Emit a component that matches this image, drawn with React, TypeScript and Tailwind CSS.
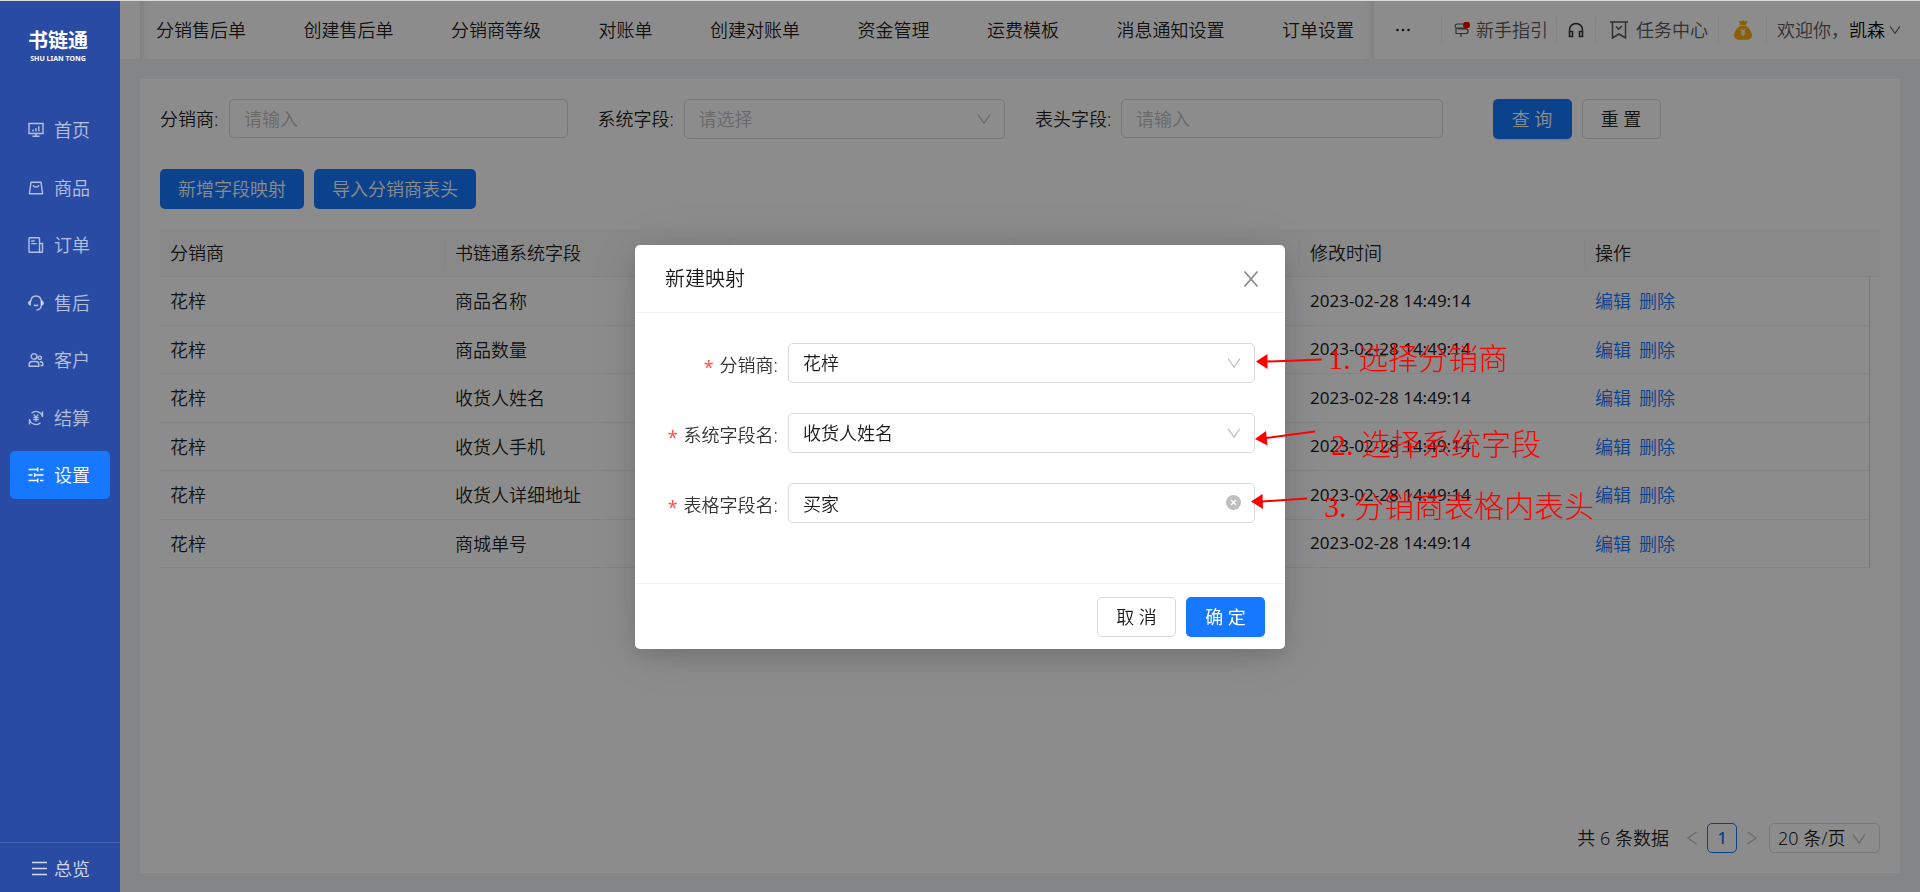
/**
 * @file App.tsx
 * @description Distributor field mapping page with the "new mapping" dialog open.
 */

import type { ReactNode } from 'react';

interface IconProps {
  className?: string;
}

interface MenuItem {
  label: string;
  icon: ReactNode;
  active?: boolean;
}

interface MappingRow {
  distributor: string;
  field: string;
  updatedAt: string;
}

const TABS = [
  '分销售后单',
  '创建售后单',
  '分销商等级',
  '对账单',
  '创建对账单',
  '资金管理',
  '运费模板',
  '消息通知设置',
  '订单设置',
];

const ROWS: MappingRow[] = [
  { distributor: '花梓', field: '商品名称', updatedAt: '2023-02-28 14:49:14' },
  { distributor: '花梓', field: '商品数量', updatedAt: '2023-02-28 14:49:14' },
  { distributor: '花梓', field: '收货人姓名', updatedAt: '2023-02-28 14:49:14' },
  { distributor: '花梓', field: '收货人手机', updatedAt: '2023-02-28 14:49:14' },
  { distributor: '花梓', field: '收货人详细地址', updatedAt: '2023-02-28 14:49:14' },
  { distributor: '花梓', field: '商城单号', updatedAt: '2023-02-28 14:49:14' },
];

/** 16px line icon used by the side menu. */
function MenuIcon({ children }: { children: ReactNode }) {
  return (
    <svg
      className="size-4 shrink-0"
      viewBox="0 0 16 16"
      fill="none"
      stroke="currentColor"
      strokeWidth="1.4"
      aria-hidden="true"
    >
      {children}
    </svg>
  );
}

const MENU: MenuItem[] = [
  {
    label: '首页',
    icon: (
      <MenuIcon>
        <path d="M1 1.5h14v10H1zM8 11.5v2.6M4.5 14.3h7" />
        <path d="M5 9.5V7.6M7.9 9.5V6M10.8 9.5V4.2" />
      </MenuIcon>
    ),
  },
  {
    label: '商品',
    icon: (
      <MenuIcon>
        <path d="M3 2.2h10l1.6 11.6H1.4z" strokeLinejoin="round" />
        <path d="M5 5.3c.6 1.2 1.7 1.8 3 1.8s2.4-.6 3-1.8" />
      </MenuIcon>
    ),
  },
  {
    label: '订单',
    icon: (
      <MenuIcon>
        <path d="M11.5 15.3H1.8a.8.8 0 0 1-.8-.8v-13a.8.8 0 0 1 .8-.8h8.9a.8.8 0 0 1 .8.8v13.8zM11.5 6.5h3v8a.8.8 0 0 1-.8.8h-2.2" />
        <path d="M3.2 4h3.5M3.2 6.6h5.5" />
      </MenuIcon>
    ),
  },
  {
    label: '售后',
    icon: (
      <MenuIcon>
        <path d="M2.7 6.5C3 3 5.2 1 8 1s5 2 5.3 5.5v4.2c-.3 2.5-2.2 4.2-4.8 4.3M5.8 9.8c1.3.9 3.1.9 4.4 0" />
        <path
          d="M2.6 5.8v4.5C1 10.2.3 9.3.3 8s.7-2.1 2.3-2.2zM13.4 5.8v4.5c1.6-.1 2.3-1 2.3-2.3s-.7-2.1-2.3-2.2z"
          fill="currentColor"
          strokeWidth="0.6"
        />
      </MenuIcon>
    ),
  },
  {
    label: '客户',
    icon: (
      <MenuIcon>
        <circle cx="6" cy="4.4" r="2.8" />
        <circle cx="11.8" cy="5.8" r="1.7" />
        <path d="M1.2 14.3v-1.8a3 3 0 0 1 3-3h3.6a3 3 0 0 1 3 3v1.8zM11.8 9.8h.6a2.4 2.4 0 0 1 2.4 2.4v1.3h-2.3" />
      </MenuIcon>
    ),
  },
  {
    label: '结算',
    icon: (
      <MenuIcon>
        <path d="M3.5 3.2A6.6 6.6 0 0 1 14.5 7M12.5 12.8A6.6 6.6 0 0 1 1.5 9M14.5 1.5V7M1.5 14.5V9" />
        <path d="m5.7 4.5 2.3 2.8 2.3-2.8M5.3 7.6h5.4M5.3 9.7h5.4M8 7.3v4.5" strokeWidth="1.2" />
      </MenuIcon>
    ),
  },
  {
    label: '设置',
    active: true,
    icon: (
      <MenuIcon>
        <path d="M.5 2.5H9M12 2.5h3.5M9.7.5v4M.5 8h4M7.5 8h8M6.6 6v4M.5 13.5H9M12 13.5h3.5M9.7 11.5v4" />
      </MenuIcon>
    ),
  },
];

function ChevronDown({ className }: IconProps) {
  return (
    <svg className={className} viewBox="0 0 14 12" fill="none" stroke="currentColor" strokeWidth="1.3" aria-hidden="true">
      <path d="M1 1.5 7 10l6-8.5" />
    </svg>
  );
}

function GuideIcon() {
  return (
    <svg className="size-4" viewBox="0 0 16 16" fill="none" stroke="#595959" strokeWidth="1.2" aria-hidden="true">
      <path d="M9 2H3.2a2 2 0 0 0-2 2.1 2 2 0 0 0 2 2.100H11M2 6.200v5.300h9.800a2.300 2.300 0 0 0 0-4.600H4M7 11.500V15" />
      <circle cx="12.5" cy="3" r="3.5" fill="#ff0000" stroke="none" />
    </svg>
  );
}

function HeadphoneIcon() {
  return (
    <svg className="size-4" viewBox="0 0 16 16" fill="none" stroke="#333333" strokeWidth="1.5" aria-hidden="true">
      <path d="M1.5 14V8a6.5 6.5 0 0 1 13 0v6M1.5 9.5h3v5h-3zM11.5 9.5h3v5h-3z" />
    </svg>
  );
}

function TaskIcon() {
  return (
    <svg className="size-[18px]" viewBox="0 0 18 18" fill="none" stroke="#595959" strokeWidth="1.5" aria-hidden="true">
      <path d="M0 1h18M2.5 1v16L9 13l6.5 4V1M6 5.5l2.7 2.8L12 5" />
    </svg>
  );
}

function MoneyBagIcon() {
  return (
    <svg className="size-5" viewBox="0 0 20 20" aria-hidden="true">
      <path
        d="M5.5.5 8 1.5 10 .3l2 1.2 2.7-1-2 4.7H7.300zM7 6h6c3.5 2.3 6 6.3 6 9.3 0 3-2 4.400-5 4.400H6c-3 0-5-1.400-5-4.400C1 12.300 3.500 8.300 7 6z"
        fill="#faad14"
      />
      <path d="m7.8 8.800 2.200 2.700 2.200-2.700M7.700 12h4.600M7.700 14h4.600M10 11.500V16" fill="none" stroke="#ffffff" strokeWidth="1.1" />
    </svg>
  );
}

function Sidebar() {
  return (
    <aside className="relative z-20 flex w-[120px] shrink-0 flex-col bg-[#294ba4] text-white/65">
      <div className="flex flex-col items-center pt-7 pr-1 text-white">
        <span className="text-[20px] leading-6 font-bold">书链通</span>
        <span className="text-[7px] leading-3 font-bold">SHU LIAN TONG</span>
      </div>
      <nav className="mt-[41px] flex h-[393px] flex-col justify-between px-2.5">
        {MENU.map((item) => (
          <a
            key={item.label}
            href="#"
            className={
              item.active
                ? 'flex h-12 items-center gap-2.5 rounded-[5px] bg-[#1677ff] pl-[18px] text-lg text-white'
                : 'flex h-12 items-center gap-2.5 rounded-[5px] pl-[18px] text-lg'
            }
          >
            {item.icon}
            {item.label}
          </a>
        ))}
      </nav>
      <button
        type="button"
        className="mt-auto flex h-[50px] items-center gap-[7px] border-t border-white/15 pt-0.5 pl-8 text-lg text-white/80"
      >
        <svg className="size-[15px]" viewBox="0 0 15 15" fill="none" stroke="currentColor" strokeWidth="1.3" aria-hidden="true">
          <path d="M0 1.5h15M0 7.5h15M0 13.5h15" />
        </svg>
        总览
      </button>
    </aside>
  );
}

function Divider() {
  return <span className="h-[26px] w-px bg-black/6" />;
}

function Header() {
  return (
    <header className="flex h-[58px] bg-white pl-5">
      <nav className="flex min-w-0 flex-1 items-center justify-between overflow-hidden pr-5 pl-4 text-lg whitespace-nowrap shadow-[inset_10px_0_8px_-8px_rgba(0,0,0,0.12),inset_-10px_0_8px_-8px_rgba(0,0,0,0.12)]">
        {TABS.map((tab) => (
          <a key={tab} href="#">
            {tab}
          </a>
        ))}
      </nav>
      <div className="flex shrink-0 items-center text-lg text-[#595959]">
        <button type="button" aria-label="更多" className="mr-2.5 flex w-[57px] justify-center">
          <svg className="h-1 w-4" viewBox="0 0 16 4" fill="#222222" aria-hidden="true">
            <circle cx="2.5" cy="2" r="1.3" />
            <circle cx="8" cy="2" r="1.3" />
            <circle cx="13.5" cy="2" r="1.3" />
          </svg>
        </button>
        <Divider />
        <a href="#" className="flex w-[114px] items-center gap-1.5 pl-3">
          <GuideIcon />
          新手指引
        </a>
        <Divider />
        <button type="button" aria-label="客服" className="flex w-[38px] justify-center">
          <HeadphoneIcon />
        </button>
        <Divider />
        <a href="#" className="flex w-[122px] items-center gap-2 pl-3.5">
          <TaskIcon />
          任务中心
        </a>
        <Divider />
        <button type="button" aria-label="账户余额" className="flex w-[47px] justify-center">
          <MoneyBagIcon />
        </button>
        <Divider />
        <button type="button" className="flex w-[153px] items-center pl-2.5">
          欢迎你{'\uff0c'}
          <span className="text-black">凯森</span>
          <ChevronDown className="ml-1 h-2.5 w-3" />
        </button>
      </div>
    </header>
  );
}

function SearchForm() {
  return (
    <form className="grid grid-cols-4 gap-x-[30px]">
      <div className="flex items-start">
        <label htmlFor="distributor" className="w-[69px] shrink-0 leading-10">
          分销商:
        </label>
        <input
          id="distributor"
          type="text"
          placeholder="请输入"
          className="h-[39px] min-w-0 flex-1 rounded-[5px] border border-[#d9d9d9] px-3.5 placeholder:text-[#bfbfbf]"
        />
      </div>
      <div className="flex items-start">
        <label htmlFor="system-field" className="w-[86px] shrink-0 leading-10">
          系统字段:
        </label>
        <div className="relative min-w-0 flex-1">
          <select
            id="system-field"
            className="h-10 w-full appearance-none rounded-[5px] border border-[#d9d9d9] px-3.5 text-[#bfbfbf]"
          >
            <option>请选择</option>
          </select>
          <ChevronDown className="pointer-events-none absolute top-3.5 right-3.5 h-3 w-3.5 text-[#bfbfbf]" />
        </div>
      </div>
      <div className="flex items-start">
        <label htmlFor="header-field" className="w-[86px] shrink-0 leading-10">
          表头字段:
        </label>
        <input
          id="header-field"
          type="text"
          placeholder="请输入"
          className="h-[39px] min-w-0 flex-1 rounded-[5px] border border-[#d9d9d9] px-3.5 placeholder:text-[#bfbfbf]"
        />
      </div>
      <div className="flex items-center gap-2.5 pl-5">
        <button type="button" className="h-10 w-[79px] rounded-[5px] bg-[#1677ff] text-white shadow-[0_2px_0_rgba(5,145,255,0.1)]">
          查 询
        </button>
        <button type="button" className="h-10 w-[79px] rounded-[5px] border border-[#d9d9d9]">
          重 置
        </button>
      </div>
    </form>
  );
}

function HeadCell({ children, last = false }: { children?: ReactNode; last?: boolean }) {
  return (
    <th className="border-b border-[#f0f0f0] p-0 text-left font-[350]">
      <div className={last ? 'flex h-7 items-center px-2.5' : 'flex h-7 items-center border-r border-[#f0f0f0] px-2.5'}>
        {children}
      </div>
    </th>
  );
}

function MappingTable() {
  return (
    <table className="mt-5 w-full table-fixed border-separate border-spacing-0">
      <colgroup>
        <col />
        <col />
        <col />
        <col />
        <col />
        <col />
        <col className="w-2.5" />
      </colgroup>
      <thead>
        <tr className="h-12 bg-[#fafafa]">
          <HeadCell>分销商</HeadCell>
          <HeadCell>书链通系统字段</HeadCell>
          <HeadCell />
          <HeadCell />
          <HeadCell>修改时间</HeadCell>
          <HeadCell last>操作</HeadCell>
          <td className="border-b border-[#f0f0f0] p-0" />
        </tr>
      </thead>
      <tbody>
        {ROWS.map((row) => (
          <tr
            key={row.field}
            className="odd:h-[49px] even:h-12 [&>td]:border-b [&>td]:border-b-[#f0f0f0] [&>td]:px-2.5 [&>td]:py-0"
          >
            <td>{row.distributor}</td>
            <td>{row.field}</td>
            <td />
            <td />
            <td className="text-[17px] font-normal">{row.updatedAt}</td>
            <td className="border-r border-r-[#d9d9d9]">
              <div className="flex gap-2 text-[#1677ff]">
                <a href="#">编辑</a>
                <a href="#">删除</a>
              </div>
            </td>
          </tr>
        ))}
      </tbody>
    </table>
  );
}

function Pagination() {
  return (
    <div className="mt-auto flex items-center justify-end">
      <span className="mr-4">共 6 条数据</span>
      <button type="button" aria-label="上一页" className="text-[#bfbfbf]">
        <ChevronDown className="h-3 w-3.5 rotate-90" />
      </button>
      <button
        type="button"
        className="mx-2 size-[30px] rounded-[5px] border border-[#1677ff] text-[17px] leading-7 font-medium text-[#1677ff]"
      >
        1
      </button>
      <button type="button" aria-label="下一页" className="text-[#bfbfbf]">
        <ChevronDown className="h-3 w-3.5 -rotate-90" />
      </button>
      <div className="relative ml-2.5">
        <select
          aria-label="每页条数"
          className="block h-[30px] w-[111px] appearance-none rounded-[5px] border border-[#d9d9d9] px-2 leading-7"
        >
          <option>20 条/页</option>
        </select>
        <ChevronDown className="pointer-events-none absolute top-2.5 right-3.5 h-3 w-3.5 text-[#bfbfbf]" />
      </div>
    </div>
  );
}

function FormLabel({ htmlFor, children }: { htmlFor: string; children: ReactNode }) {
  return (
    <label htmlFor={htmlFor} className="flex w-[123px] shrink-0 justify-end pt-1 pr-2.5 text-[#333333]">
      <span className="mr-1.5 pt-1 leading-6 font-normal text-[#ff4d4f]">*</span>
      {children}:
    </label>
  );
}

function SelectField({ id, label, value }: { id: string; label: string; value: string }) {
  return (
    <div className="flex items-center">
      <FormLabel htmlFor={id}>{label}</FormLabel>
      <div className="relative flex-1">
        <select id={id} className="block h-10 w-full appearance-none rounded-[5px] border border-[#d9d9d9] px-3.5">
          <option>{value}</option>
        </select>
        <ChevronDown className="pointer-events-none absolute top-3.5 right-3.5 h-3 w-3.5 text-[#bfbfbf]" />
      </div>
    </div>
  );
}

/** Red step notes that float over the right edge of the dialog. */
function StepNotes() {
  return (
    <>
      <svg
        className="pointer-events-none absolute top-[90px] left-[610px] h-[190px] w-[90px]"
        viewBox="0 0 90 190"
        fill="#ff0000"
        stroke="#ff0000"
        strokeWidth="2"
        aria-hidden="true"
      >
        <path d="M22 26.5 77 24.5M21 103 70 96.5M17 166.5 62 163.5" />
        <path d="M11 26.5 22.5 19v15zM10 104l11-8 1.5 14.5zM6 166.5 17.5 159l.5 15z" stroke="none" />
      </svg>
      <div className="pointer-events-none absolute top-[94px] left-[693px] font-['Liberation_Serif','Noto_Sans_CJK_SC',serif] text-[30px] leading-10 font-light whitespace-nowrap text-[#ff0000]">
        1. 选择分销商
      </div>
      <div className="pointer-events-none absolute top-[180px] left-[696px] font-['Liberation_Serif','Noto_Sans_CJK_SC',serif] text-[30px] leading-10 font-light whitespace-nowrap text-[#ff0000]">
        2. 选择系统字段
      </div>
      <div className="pointer-events-none absolute top-[242px] left-[689px] font-['Liberation_Serif','Noto_Sans_CJK_SC',serif] text-[30px] leading-10 font-light whitespace-nowrap text-[#ff0000]">
        3. 分销商表格内表头
      </div>
    </>
  );
}

function MappingDialog() {
  return (
    <div
      role="dialog"
      aria-labelledby="dialog-title"
      className="relative w-[650px] rounded-[5px] bg-white shadow-[0_8px_20px_rgba(0,0,0,0.12),0_4px_60px_rgba(0,0,0,0.12)]"
    >
      <div className="flex h-[68px] items-center justify-between border-b border-[#f0f0f0] px-[30px] pt-0.5">
        <h2 id="dialog-title" className="text-xl">
          新建映射
        </h2>
        <button type="button" aria-label="关闭" className="mr-[-4px] text-[#8c8c8c]">
          <svg className="size-4" viewBox="0 0 16 16" fill="none" stroke="currentColor" strokeWidth="1.7" aria-hidden="true">
            <path d="m1.5.5 13 15M14.5.5l-13 15" />
          </svg>
        </button>
      </div>
      <form className="flex flex-col gap-[30px] px-[30px] pt-[30px] pb-[60px]">
        <SelectField id="form-distributor" label="分销商" value="花梓" />
        <SelectField id="form-system-field" label="系统字段名" value="收货人姓名" />
        <div className="flex items-center">
          <FormLabel htmlFor="form-header-field">表格字段名</FormLabel>
          <div className="relative flex-1">
            <input
              id="form-header-field"
              type="text"
              defaultValue="买家"
              className="block h-10 w-full rounded-[5px] border border-[#d9d9d9] px-3.5"
            />
            <button type="button" aria-label="清除" className="absolute top-3 right-3.5">
              <svg className="size-[15px]" viewBox="0 0 15 15" aria-hidden="true">
                <circle cx="7.5" cy="7.5" r="7.5" fill="#bfbfbf" />
                <path d="m5 5 5 5M10 5l-5 5" stroke="#ffffff" strokeWidth="1.3" />
              </svg>
            </button>
          </div>
        </div>
      </form>
      <div className="flex justify-end gap-2.5 border-t border-[#f0f0f0] px-5 pt-[13px] pb-3">
        <button type="button" className="h-10 w-[79px] rounded-[5px] border border-[#d9d9d9]">
          取 消
        </button>
        <button type="button" className="h-10 w-[79px] rounded-[5px] bg-[#1677ff] font-normal text-white">
          确 定
        </button>
      </div>
      <StepNotes />
    </div>
  );
}

export default function App() {
  return (
    <div className="flex min-h-screen border-t border-[#d9dcdc] bg-[#f0f2f5] font-['Noto_Sans','Noto_Sans_CJK_SC',sans-serif] text-lg font-[350] text-black/90">
      <Sidebar />
      <div className="flex min-w-0 flex-1 flex-col">
        <Header />
        <main className="mx-5 mt-5 mb-[19px] flex flex-1 flex-col bg-white p-5">
          <SearchForm />
          <div className="mt-[30px] flex gap-2.5">
            <button type="button" className="h-10 rounded-[5px] bg-[#1677ff] px-[18px] text-white">
              新增字段映射
            </button>
            <button type="button" className="h-10 rounded-[5px] bg-[#1677ff] px-[18px] text-white">
              导入分销商表头
            </button>
          </div>
          <MappingTable />
          <Pagination />
        </main>
      </div>
      <div className="fixed inset-x-0 top-px bottom-0 z-10 flex items-center justify-center bg-black/45">
        <MappingDialog />
      </div>
    </div>
  );
}
